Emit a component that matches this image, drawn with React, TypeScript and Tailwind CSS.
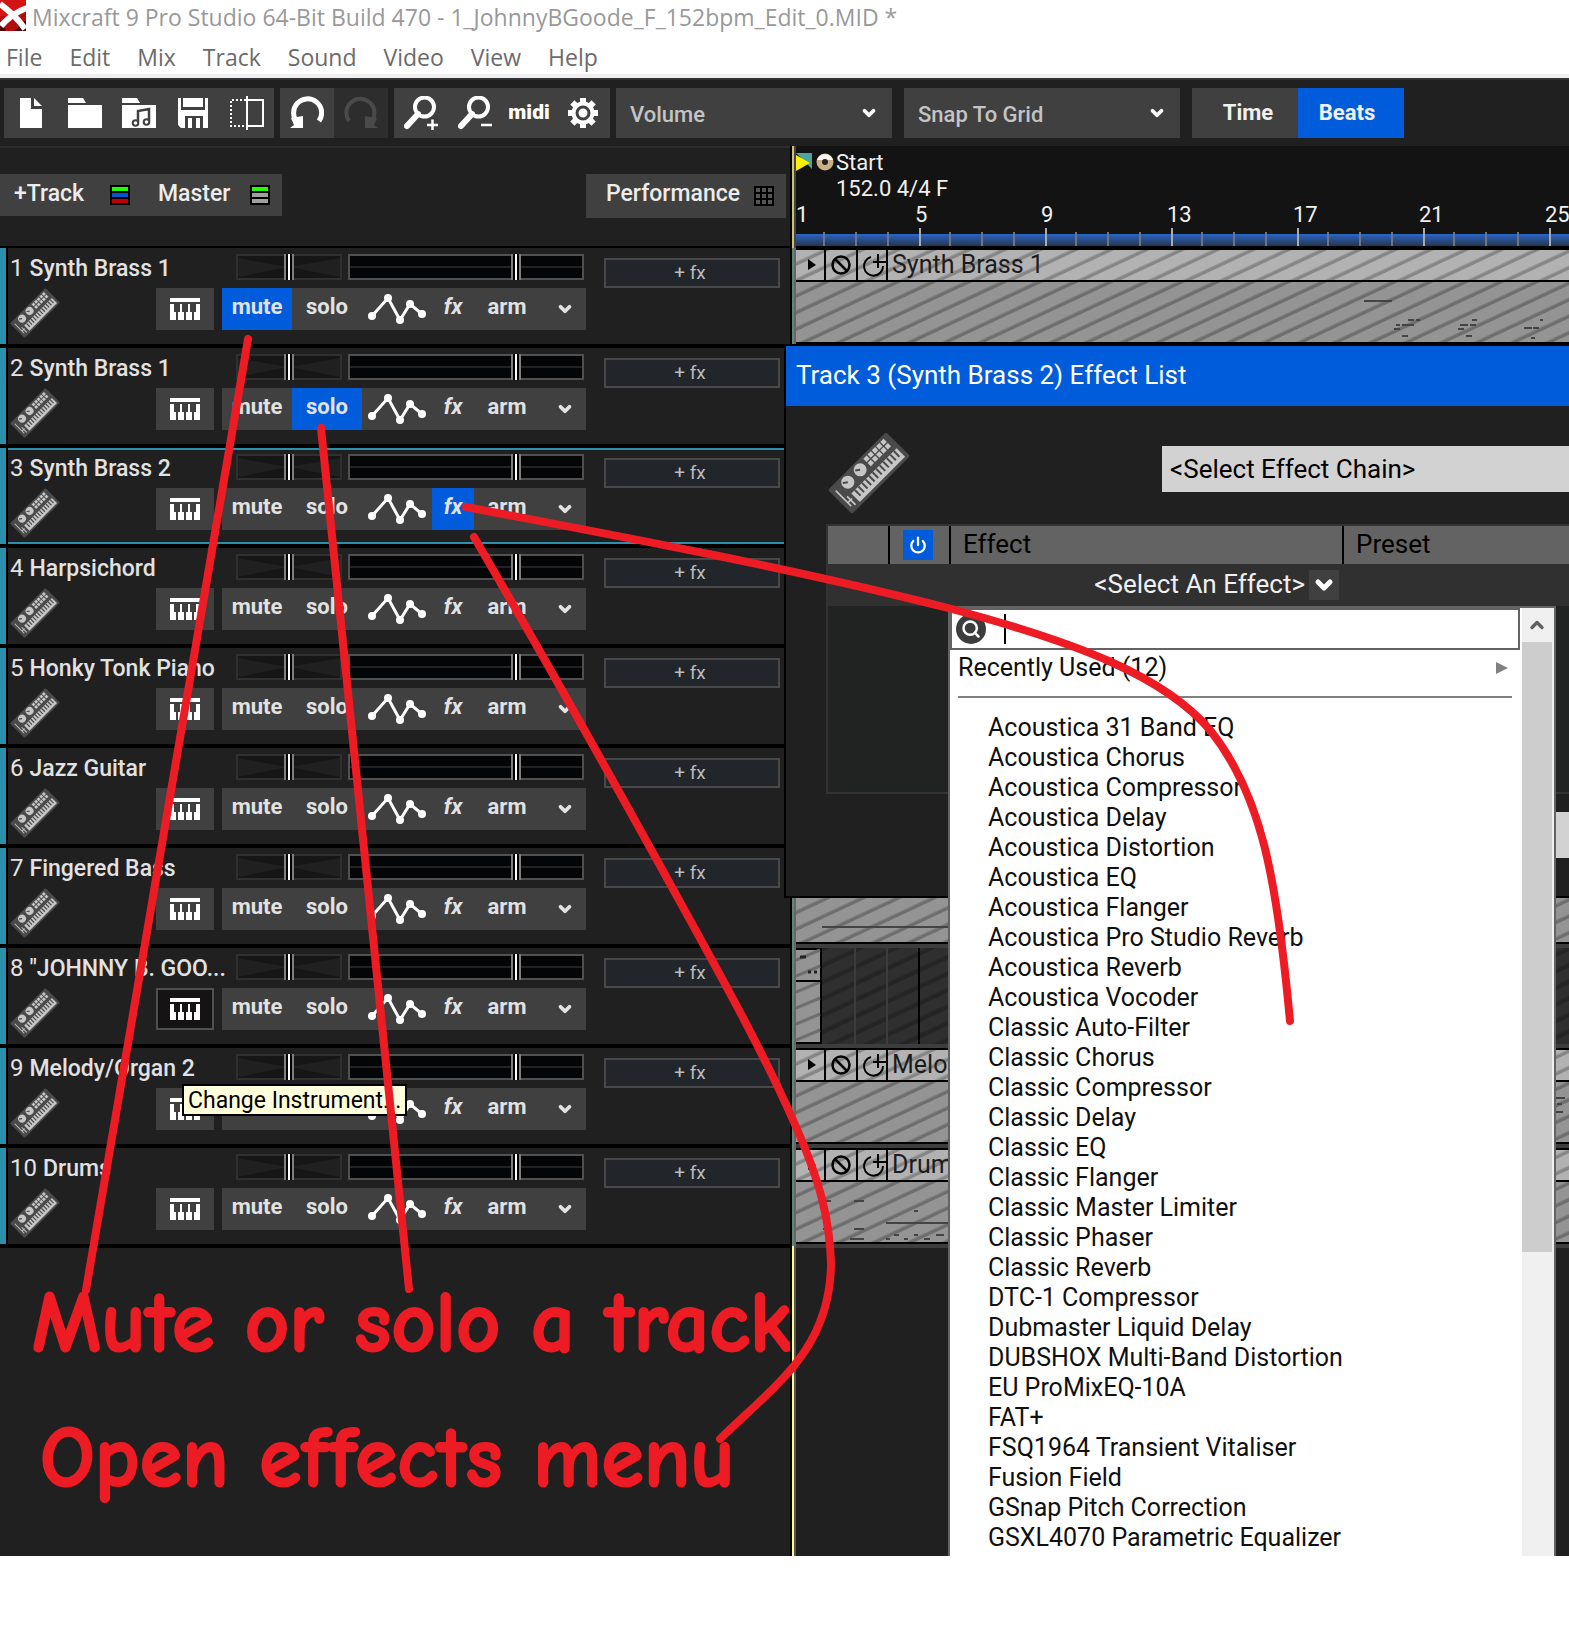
import type { ReactNode } from "react";
import { ChevronDown, ChevronUp, Power, Search } from "lucide-react";

type Track = {
  id: number;
  name: string;
  active?: "mute" | "solo" | "fx";
  selected?: boolean;
  keysPressed?: boolean;
  tooltip?: string;
};

const menus = ["File", "Edit", "Mix", "Track", "Sound", "Video", "View", "Help"];

const tracks: Track[] = [
  { id: 1, name: "Synth Brass 1", active: "mute" },
  { id: 2, name: "Synth Brass 1", active: "solo" },
  { id: 3, name: "Synth Brass 2", active: "fx", selected: true },
  { id: 4, name: "Harpsichord" },
  { id: 5, name: "Honky Tonk Piano" },
  { id: 6, name: "Jazz Guitar" },
  { id: 7, name: "Fingered Bass" },
  { id: 8, name: '"JOHNNY B. GOO...', keysPressed: true },
  { id: 9, name: "Melody/Organ 2", tooltip: "Change Instrument..." },
  { id: 10, name: "Drums" },
];

const effects = [
  "Acoustica 31 Band EQ",
  "Acoustica Chorus",
  "Acoustica Compressor",
  "Acoustica Delay",
  "Acoustica Distortion",
  "Acoustica EQ",
  "Acoustica Flanger",
  "Acoustica Pro Studio Reverb",
  "Acoustica Reverb",
  "Acoustica Vocoder",
  "Classic Auto-Filter",
  "Classic Chorus",
  "Classic Compressor",
  "Classic Delay",
  "Classic EQ",
  "Classic Flanger",
  "Classic Master Limiter",
  "Classic Phaser",
  "Classic Reverb",
  "DTC-1 Compressor",
  "Dubmaster Liquid Delay",
  "DUBSHOX Multi-Band Distortion",
  "EU ProMixEQ-10A",
  "FAT+",
  "FSQ1964 Transient Vitaliser",
  "Fusion Field",
  "GSnap Pitch Correction",
  "GSXL4070 Parametric Equalizer",
];

const headerStripes =
  "bg-[repeating-linear-gradient(155deg,#b2b2b2_0px,#b2b2b2_10px,#868686_12px,#868686_14px,#b2b2b2_15px)]";
const bodyStripes =
  "bg-[repeating-linear-gradient(155deg,#949494_0px,#949494_10px,#6e6e6e_12px,#6e6e6e_14px,#949494_15px)]";
const emptyStripes =
  "bg-[repeating-linear-gradient(155deg,#2f2f2f_0px,#2f2f2f_9px,#252525_11px,#252525_14px,#2f2f2f_15px)]";

function KeyboardIcon({ className }: { className: string }) {
  return (
    <svg viewBox="0 0 82 82" className={className} aria-hidden="true">
      <g transform="rotate(-45 41 41)">
        <rect x="0" y="24" width="82" height="34" rx="2" fill="#4a4a4a" />
        <circle cx="19.5" cy="32.5" r="6.5" fill="#c6c6c6" />
        <circle cx="37" cy="32.5" r="6.5" fill="#c6c6c6" />
        <path d="M19.5 32.5l-4-3M37 32.5l-4-3" stroke="#4a4a4a" strokeWidth="2" />
        {[0, 1, 2, 3, 4].map((i) => (
          <g key={i} fill="#c6c6c6">
            <rect x={47 + i * 6} y="27" width="4.6" height="4.6" />
            <rect x={47 + i * 6} y="33" width="4.6" height="4.6" />
          </g>
        ))}
        <rect x="14" y="43" width="64" height="12" fill="#c6c6c6" />
        {[0, 1, 2, 3, 4, 5, 6, 7, 8, 9, 10, 11].map((i) => (
          <rect key={i} x={18 + i * 5} y="43" width="2" height="8" fill="#4a4a4a" />
        ))}
        <path d="M5 30v22M9 42v12M5 47h6" stroke="#c6c6c6" strokeWidth="1.6" />
      </g>
    </svg>
  );
}

function PianoKeysIcon() {
  return (
    <svg width="30" height="22" viewBox="0 0 30 22" fill="#fff" aria-hidden="true">
      <rect width="30" height="4" />
      <path d="M0 6h4v8h2v8H0zM10 6h2v8h2v8H8v-8h2zM18 6h2v8h2v8h-6v-8h2zM26 6h4v16h-6v-8h2z" />
    </svg>
  );
}

function AutomationIcon() {
  return (
    <svg width="70" height="42" viewBox="0 0 70 42" fill="#fff" aria-hidden="true">
      <path d="M10 28L26 10L38 32L48 16L60 26" fill="none" stroke="#fff" strokeWidth="3" />
      <circle cx="10" cy="28" r="4" />
      <circle cx="26" cy="10" r="4" />
      <circle cx="38" cy="32" r="4" />
      <circle cx="48" cy="16" r="4" />
      <circle cx="60" cy="26" r="4" />
    </svg>
  );
}

function ToolIcon({ children }: { children: ReactNode }) {
  return (
    <svg width="34" height="34" viewBox="0 0 34 34" fill="#fff" aria-hidden="true">
      {children}
    </svg>
  );
}

function ToolButton({ label, dim, children }: { label: string; dim?: boolean; children: ReactNode }) {
  return (
    <button
      type="button"
      aria-label={label}
      disabled={dim}
      className={`flex h-[50px] w-[54px] items-center justify-center ${dim ? "bg-[#2d2d2d]" : "bg-[#404040]"}`}
    >
      {children}
    </button>
  );
}

function ToolSelect({ label, value }: { label: string; value: string }) {
  return (
    <div className="relative h-[50px] w-[276px]">
      <select
        aria-label={label}
        defaultValue={value}
        className="h-full w-full appearance-none bg-[#404040] pt-0.5 pl-3.5 text-[22px] font-medium text-[#c4c4c4]"
      >
        <option>{value}</option>
      </select>
      <ChevronDown className="pointer-events-none absolute top-4 right-3.5 size-[18px] text-white" strokeWidth={5} />
    </div>
  );
}

function TitleBar() {
  return (
    <header className="border-b-4 border-[#f0f0f0] bg-white font-['Open_Sans',sans-serif]">
      <div className="flex h-[34px] items-center gap-1.5 text-[23px] leading-[34px] text-[#999]">
        <svg width="26" height="31" viewBox="0 0 26 31" className="self-start" aria-hidden="true">
          <rect width="26" height="31" fill="#b50d0d" />
          <path d="M0 0h26v10L8 16H0z" fill="#d41414" />
          <path d="M14 31L26 20v11zM0 20l6 11H0z" fill="#4a0303" />
          <path d="M0 4c8 6 17 13 25 25M27 8C18 11 8 18 1 26" stroke="#fff" strokeWidth="6" fill="none" />
        </svg>
        <h1 className="whitespace-nowrap">
          Mixcraft 9 Pro Studio 64-Bit Build 470 - 1_JohnnyBGoode_F_152bpm_Edit_0.MID *
        </h1>
      </div>
      <nav className="flex h-10 items-start gap-[27px] pl-1.5 text-[23px] leading-[46px] text-[#6b6b6b]">
        {menus.map((menu) => (
          <button key={menu} type="button">
            {menu}
          </button>
        ))}
      </nav>
    </header>
  );
}

function Toolbar() {
  return (
    <div className="flex h-[68px] items-center border-t-2 border-[#333] bg-[#202020] pl-1">
      <div className="flex">
        <ToolButton label="New">
          <ToolIcon>
            <path d="M6 2h11v11h11v19H6zM20 2l8 8h-8z" />
          </ToolIcon>
        </ToolButton>
        <ToolButton label="Open">
          <ToolIcon>
            <path d="M0 2h15l3 5H0zM0 9h34v23H0z" />
          </ToolIcon>
        </ToolButton>
        <ToolButton label="Open library">
          <ToolIcon>
            <path d="M0 2h15l3 5H0zM0 9h34v23H0z" />
            <path d="M16 26V15l11-2v12" stroke="#404040" strokeWidth="2.5" fill="none" />
            <circle cx="13.500" cy="27" r="2.800" stroke="#404040" strokeWidth="2" />
            <circle cx="24.500" cy="26" r="2.800" stroke="#404040" strokeWidth="2" />
          </ToolIcon>
        </ToolButton>
        <ToolButton label="Save">
          <ToolIcon>
            <path d="M2 2h3v12h24V2h3v30h-5V20H9v12H5l-3-3zM7 2h18v9H7zM21 2h6v9h-6zM12 22h4v10h-4zM20 22h4v10h-4z" />
          </ToolIcon>
        </ToolButton>
        <ToolButton label="Split">
          <ToolIcon>
            <path d="M16 4H1v26h15" fill="none" stroke="#fff" strokeWidth="2" strokeDasharray="2 2" />
            <path d="M17 0v34M17 4h16v26H17" fill="none" stroke="#fff" strokeWidth="2" />
          </ToolIcon>
        </ToolButton>
      </div>
      <div className="ml-1.5 flex">
        <ToolButton label="Undo">
          <ToolIcon>
            <path d="M8 27A14 14 0 1 1 29 25" fill="none" stroke="#fff" strokeWidth="5" />
            <path d="M0 32l4-3-3-7 12-2v12z" />
          </ToolIcon>
        </ToolButton>
        <ToolButton label="Redo" dim>
          <ToolIcon>
            <path d="M26 27A14 14 0 1 0 5 25" fill="none" stroke="#4a4a4a" strokeWidth="4" />
            <path d="M34 32l-4-3 3-7-12-2v12z" fill="#4a4a4a" />
          </ToolIcon>
        </ToolButton>
      </div>
      <div className="ml-1.5 flex">
        <ToolButton label="Zoom in">
          <ToolIcon>
            <circle cx="20.500" cy="11" r="9.500" fill="none" stroke="#fff" strokeWidth="4" />
            <path d="M14 18L3 30" stroke="#fff" strokeWidth="6" strokeLinecap="round" />
            <path d="M23 29h11M28.500 23.500v11" stroke="#fff" strokeWidth="2.500" />
          </ToolIcon>
        </ToolButton>
        <ToolButton label="Zoom out">
          <ToolIcon>
            <circle cx="20.500" cy="11" r="9.500" fill="none" stroke="#fff" strokeWidth="4" />
            <path d="M14 18L3 30" stroke="#fff" strokeWidth="6" strokeLinecap="round" />
            <path d="M23 29h11" stroke="#fff" strokeWidth="2.500" />
          </ToolIcon>
        </ToolButton>
        <button
          type="button"
          className="flex h-[50px] w-[54px] items-center justify-center bg-[#404040] text-[21px] font-black text-white"
        >
          midi
        </button>
        <ToolButton label="Preferences">
          <ToolIcon>
            {[0, 45, 90, 135].map((deg) => (
              <rect key={deg} x="14" y="2" width="6" height="30" transform={`rotate(${deg} 17 17)`} />
            ))}
            <circle cx="17" cy="17" r="11.500" />
            <circle cx="17" cy="17" r="6" stroke="#404040" strokeWidth="3" />
          </ToolIcon>
        </ToolButton>
      </div>
      <div className="ml-1.5 flex gap-3">
        <ToolSelect label="Automation" value="Volume" />
        <ToolSelect label="Snap" value="Snap To Grid" />
        <div className="flex h-[50px] text-[22px] font-bold text-[#f0f0f0]">
          <button type="button" className="w-[106px] bg-[#404040] pb-0.5 pl-1.5">
            Time
          </button>
          <button type="button" className="w-[106px] bg-[#005cdb] pr-2 pb-0.5">
            Beats
          </button>
        </div>
      </div>
    </div>
  );
}

function ListIcon({ bars }: { bars: string[] }) {
  return (
    <svg width="20" height="20" viewBox="0 0 20 20" aria-hidden="true">
      <rect width="20" height="20" fill="#000" />
      {bars.map((fill, i) => (
        <rect key={i} x="2" y={2 + i * 6} width="16" height="4" fill={fill} />
      ))}
    </svg>
  );
}

function TrackHeaderBar() {
  return (
    <div className="flex h-[102px] items-start justify-between border-t-2 border-b-2 border-t-[#2d2d2d] border-b-black pt-[26px] pr-1 text-[23px] font-medium text-[#ececec]">
      <div className="flex h-[42px] bg-[#404040]">
        <button type="button" className="flex w-[144px] items-center justify-between px-3.5">
          <span className="pb-0.5">+Track</span>
          <ListIcon bars={["#1eff00", "#0055d4", "#c00000"]} />
        </button>
        <button type="button" className="flex w-[138px] items-center justify-between pr-3 pl-3.5">
          <span className="pb-0.5">Master</span>
          <ListIcon bars={["#1eff00", "#a0a0a0", "#a0a0a0"]} />
        </button>
      </div>
      <button type="button" className="flex h-[44px] w-[200px] items-center justify-between bg-[#404040] pr-3 pl-5">
        <span className="pb-1">Performance</span>
        <svg width="20" height="20" viewBox="0 0 20 20" aria-hidden="true">
          <rect width="20" height="20" fill="#000" />
          {[0, 1, 2, 3, 4, 5, 6, 7, 8].map((i) => (
            <rect key={i} x={2 + (i % 3) * 6} y={2 + Math.floor(i / 3) * 6} width="4" height="4" fill="#555" />
          ))}
        </svg>
      </button>
    </div>
  );
}

const sliderClass =
  "h-[26px] w-full appearance-none bg-transparent [grid-area:1/1] [&::-webkit-slider-thumb]:h-[26px] [&::-webkit-slider-thumb]:w-[10px] [&::-webkit-slider-thumb]:appearance-none [&::-webkit-slider-thumb]:bg-[linear-gradient(90deg,#808080_2px,#000_2px,#000_4px,#fff_4px,#fff_6px,#000_6px,#000_8px,#808080_8px)]";

function PanSlider({ label }: { label: string }) {
  return (
    <div className="grid w-[106px]">
      <svg className="h-[26px] w-full [grid-area:1/1]" viewBox="0 0 106 26" aria-hidden="true">
        <rect x="1" y="1" width="104" height="24" fill="#161616" stroke="#303030" strokeWidth="2" />
        <path d="M2 4L52 13L2 23zM104 4L54 13L104 23z" fill="#202020" />
      </svg>
      <input type="range" aria-label={label} defaultValue={50} className={sliderClass} />
    </div>
  );
}

function VolumeSlider({ label }: { label: string }) {
  return (
    <div className="grid w-[236px]">
      <div className="h-[26px] border-2 border-[#505050] bg-[linear-gradient(#040506_10px,#222_10px,#222_12px,#040506_12px)] [grid-area:1/1]" />
      <input type="range" aria-label={label} defaultValue={72} className={sliderClass} />
    </div>
  );
}

function TrackRow({ track }: { track: Track }) {
  const on = "bg-[#005cdb]";
  // the tooltip lies over these two captions
  const caption = track.tooltip ? "invisible" : "";
  return (
    <section className="relative flex h-[100px] border-b-4 border-black bg-[#202020]">
      <div className="w-2 shrink-0 border-r-2 border-black bg-[#2d8fae]" />
      <div className={`flex min-w-0 flex-1 ${track.selected ? "border-y-2 border-[#2d8fae]" : "border-y-2 border-[#202020]"}`}>
        <div className="w-[578px] shrink-0">
          <div className="flex h-[38px] items-start gap-1.5 pt-1">
            <h2 className="flex w-[222px] items-baseline gap-1.5 pl-0.5 leading-[28px] whitespace-nowrap text-[#e2e2e2]">
              <span className="text-[24px]">{track.id}</span>
              <span className="text-[23px] font-medium">{track.name}</span>
            </h2>
            <PanSlider label={`Pan ${track.id}`} />
            <VolumeSlider label={`Volume ${track.id}`} />
          </div>
          <div className="flex h-[42px] text-[22px] font-bold text-[#e2e2e2]">
            <KeyboardIcon className="ml-0.5 size-[50px] shrink-0" />
            <button
              type="button"
              aria-label="Instrument"
              className={`mr-2 ml-24 flex w-[58px] items-center justify-center ${
                track.keysPressed ? "border-2 border-[#505050] bg-[#161315]" : "bg-[#404040]"
              }`}
            >
              <PianoKeysIcon />
            </button>
            <div className="flex bg-[#404040]">
              <button type="button" className={`w-[70px] pb-1.5 ${caption} ${track.active === "mute" ? on : ""}`}>
                mute
              </button>
              <button type="button" className={`w-[70px] pb-1.5 ${caption} ${track.active === "solo" ? on : ""}`}>
                solo
              </button>
              <button type="button" aria-label="Automation">
                <AutomationIcon />
              </button>
              <button type="button" className={`w-[42px] pb-1.5 italic ${track.active === "fx" ? on : ""}`}>
                fx
              </button>
              <button type="button" className="w-[66px] pb-1.5">
                arm
              </button>
              <button type="button" aria-label="More" className="flex w-[46px] items-center justify-center pl-1">
                <ChevronDown className="size-[18px]" strokeWidth={5} />
              </button>
            </div>
          </div>
        </div>
        <div className="pt-2 pl-[18px]">
          <button
            type="button"
            className="h-[30px] w-[176px] border-2 border-[#484848] bg-[#22262a] pr-1 text-[19px] leading-[26px] text-[#bcbcbc]"
          >
            + fx
          </button>
        </div>
      </div>
      {track.tooltip && (
        <div
          role="tooltip"
          className="absolute top-9 left-[182px] border-2 border-black bg-[#ffffdc] px-1 pt-0.5 text-[23px] leading-[26px] whitespace-nowrap text-black"
        >
          {track.tooltip}
        </div>
      )}
    </section>
  );
}

function TimelineRuler() {
  return (
    <div className="h-[102px] border-b-2 border-black bg-[#131313] text-[22px] text-[#f0f0f0]">
      <div className="flex h-[52px] items-start pt-1">
        <svg width="40" height="24" viewBox="0 0 40 24" aria-hidden="true">
          <path d="M0 3h16v16z" fill="#4aa59c" />
          <path d="M0 5l14 8L0 21z" fill="#ffee00" />
          <circle cx="29" cy="12" r="8.500" fill="#c9b183" />
          <path d="M21 10a8.500 8.500 0 0 1 16 0z" fill="#f5f5f5" />
          <circle cx="29" cy="12" r="3" fill="#222" />
        </svg>
        <p className="leading-[26px]">
          Start
          <br />
          152.0 4/4 F
        </p>
      </div>
      <div className="flex h-[30px] overflow-hidden leading-[30px]">
        <span className="w-[119px] shrink-0 pt-0.5">1</span>
        {[5, 9, 13, 17, 21, 25].map((bar) => (
          <span key={bar} className="w-[126px] shrink-0 pt-0.5">
            {bar}
          </span>
        ))}
      </div>
      <svg className="h-[18px] w-full" aria-hidden="true">
        <defs>
          <linearGradient id="ruler" x1="0" y1="0" x2="0" y2="1">
            <stop offset="0" stopColor="#2a66c8" />
            <stop offset="1" stopColor="#26354a" />
          </linearGradient>
          <pattern id="ticks" width="126" height="18" x="-3" y="0" patternUnits="userSpaceOnUse">
            <path d="M1 0v18" stroke="#aaa" strokeWidth="2" />
            <path d="M31 4v14M63 4v14M95 4v14" stroke="#6f7580" strokeWidth="2" />
          </pattern>
        </defs>
        <rect y="6" width="100%" height="12" fill="url(#ruler)" />
        <rect width="100%" height="18" fill="url(#ticks)" />
      </svg>
    </div>
  );
}

function ClipLane({ name, notes, narrow }: { name?: string; notes?: string; narrow?: boolean }) {
  return (
    <div className="h-[100px] border-b-4 border-[#3d3d3d]">
      <div className="h-24 border-y-2 border-black">
        <div className={`flex h-8 border-b-2 border-black text-[25px] leading-[30px] text-[#1c1c1c] ${headerStripes}`}>
          <svg width="92" height="30" viewBox="0 0 92 30" className="shrink-0" fill="none" stroke="#000" aria-hidden="true">
            <path d="M29 0v30M61 0v30M91 0v30" strokeWidth="2" />
            <path d="M12 9l8 6l-8 5z" fill="#000" stroke="none" />
            <circle cx="45" cy="15" r="8.500" strokeWidth="2.500" />
            <path d="M39 9l12 12" strokeWidth="2.500" />
            <path d="M75 7a9.500 9.500 0 1 0 12 9M82 4v14M77 12h13" strokeWidth="2" />
          </svg>
          <span className={`overflow-hidden pl-1 whitespace-nowrap ${narrow ? "w-[60px]" : ""}`}>{name}</span>
        </div>
        <div className={`h-[60px] ${bodyStripes}`}>
          {notes && (
            <svg width="773" height="60" viewBox="0 0 773 60" fill="none" stroke="#444" strokeWidth="2" aria-hidden="true">
              <path d={notes} />
            </svg>
          )}
        </div>
      </div>
    </div>
  );
}

function Timeline() {
  return (
    <div className="min-w-0 flex-1 overflow-hidden">
      <TimelineRuler />
      <ClipLane
        name="Synth Brass 1"
        notes="M568 19h28M612 38h6M620 38h4M600 43h4M606 43h12M598 47h6M606 54h6M676 38h5M664 43h8M674 43h6M662 47h6M670 54h6M744 38h3M728 46h8M737 46h6M735 56h4"
      />
      <ClipLane />
      <ClipLane />
      <ClipLane />
      <ClipLane />
      <ClipLane />
      <ClipLane notes="M26 45h640" />
      <div className={`h-[100px] border-b-4 border-[#3d3d3d] ${emptyStripes}`}>
        <svg width="130" height="96" viewBox="0 0 130 96" fill="none" aria-hidden="true">
          <path d="M59 0v96M91 0v96" stroke="#3c3c3c" strokeWidth="2" />
          <path d="M123 0v96" stroke="#000" strokeWidth="2" />
          <rect x="-4" y="1" width="29" height="94" fill="#949494" stroke="#000" strokeWidth="2" />
          <path d="M0 12l24-10M0 28l24-10M0 44l24-10M0 60l24-10M0 76l24-10M0 92l24-10" stroke="#6e6e6e" strokeWidth="3" />
          <path d="M0 33h25" stroke="#000" strokeWidth="2" />
          <path d="M4 9h6M12 24h3M18 24h3" stroke="#222" strokeWidth="3" />
        </svg>
      </div>
      <ClipLane narrow name="Melody" notes="M757 16h12M761 22h5M759 30h8" />
      <ClipLane
        narrow
        name="Drums"
        notes="M27 19h8M58 19h10M118 29h4M90 41h70M27 47h8M58 47h10M54 57h14M90 57h4M98 53h5M108 57h4M118 53h4M128 57h6M140 53h8"
      />
    </div>
  );
}

function EffectMenu() {
  return (
    <div className="absolute top-[260px] left-[162px] flex w-[608px] border-2 border-[#636363] bg-white text-[25px] text-[#101010]">
      <div className="w-[570px]">
        <label className="flex h-[42px] items-center border-2 border-[#636363] pl-1">
          <span className="flex size-[30px] items-center justify-center rounded-full bg-[#3c3c3c]">
            <Search className="size-5 text-white" strokeWidth={3} />
          </span>
          <input
            type="text"
            aria-label="Search effects"
            className="ml-[18px] h-[30px] min-w-0 flex-1 border-l-2 border-black pl-1 outline-none"
          />
        </label>
        <button type="button" className="flex h-[34px] w-full items-center justify-between pt-0.5 pr-3 pl-2">
          <span>Recently Used (12)</span>
          <svg width="12" height="12" viewBox="0 0 12 12" aria-hidden="true">
            <path d="M0 0l12 6l-12 6z" fill="#808080" />
          </svg>
        </button>
        <div className="mx-2 mt-3 mb-[15px] h-0.5 bg-[#808080]" />
        <ul className="pb-2">
          {effects.map((effect) => (
            <li key={effect} className="pl-[38px] leading-[30px] whitespace-nowrap">
              {effect}
            </li>
          ))}
        </ul>
      </div>
      <div className="ml-0.5 w-8 bg-[#f0f0f0] pr-0.5">
        <button type="button" aria-label="Scroll up" className="flex h-[34px] w-full items-center justify-center">
          <ChevronUp className="size-5 text-[#606060]" strokeWidth={4} />
        </button>
        <div className="h-[610px] bg-[#cdcdcd]" />
      </div>
    </div>
  );
}

function EffectDialog() {
  return (
    <div
      role="dialog"
      aria-label="Effect list"
      className="absolute top-[198px] right-0 left-[784px] h-[554px] border-y-2 border-l-2 border-black bg-[#202020] text-[26px] text-[#f0f0f0]"
    >
      <h2 className="h-[60px] bg-[#005cdb] pl-2.5 leading-[58px] text-white">Track 3 (Synth Brass 2) Effect List</h2>
      <div className="flex h-[118px] items-start justify-between pt-[26px]">
        <KeyboardIcon className="ml-[42px] size-[82px] shrink-0" />
        <select
          aria-label="Effect chain"
          defaultValue="<Select Effect Chain>"
          className="mt-3.5 ml-[252px] h-[46px] min-w-0 flex-1 appearance-none bg-[#d2d2d2] pl-2 text-black"
        >
          <option>{"<Select Effect Chain>"}</option>
        </select>
      </div>
      <div className="ml-10 h-[270px] border-y-2 border-l-2 border-[#333] bg-[#212323]">
        <table className="w-full table-fixed border-collapse">
          <thead>
            <tr className="h-[38px] bg-[#636363] text-left text-black">
              <th scope="col" aria-label="Number" className="w-[61px] p-0" />
              <th scope="col" className="w-[61px] border-l-2 border-black p-0 pr-1">
                <button type="button" aria-label="Power" className="mx-auto flex size-[30px] items-center justify-center bg-[#005cdb]">
                  <Power className="size-[18px] text-white" strokeWidth={3} />
                </button>
              </th>
              <th scope="col" className="w-[393px] border-l-2 border-black p-0 pb-0.5 pl-3 leading-[34px] font-normal">
                Effect
              </th>
              <th scope="col" className="border-l-2 border-black p-0 pb-0.5 pl-3 leading-[34px] font-normal">
                Preset
              </th>
            </tr>
          </thead>
          <tbody>
            <tr className="h-[42px] bg-[#303030]">
              <td colSpan={3} className="p-0">
                <button type="button" aria-haspopup="listbox" className="ml-auto flex items-center gap-1 pr-1 leading-[36px]">
                  <span className="pb-0.5">{"<Select An Effect>"}</span>
                  <span className="flex size-[30px] items-center justify-center bg-[#404040]">
                    <ChevronDown className="size-6 text-white" strokeWidth={5} />
                  </span>
                </button>
              </td>
              <td className="p-0" />
            </tr>
          </tbody>
        </table>
      </div>
      <div className="flex justify-end pt-[18px]">
        <button type="button" aria-label="Close" className="h-[46px] w-[120px] bg-[#d2d2d2]" />
      </div>
      <EffectMenu />
    </div>
  );
}

function Annotations() {
  return (
    <svg
      width="1400"
      height="1556"
      viewBox="0 0 1400 1556"
      className="pointer-events-none absolute top-0 left-0"
      fill="none"
      stroke="#ed1c24"
      strokeWidth="8"
      strokeLinecap="round"
      strokeLinejoin="round"
      aria-hidden="true"
    >
      <path d="M248 339L86 1290" />
      <path d="M321 428L409 1289" />
      <path d="M474 537C540 650 610 775 668 880S762 1050 793 1120C820 1180 830 1220 831 1264C830 1350 775 1385 720 1439" />
      <path d="M466 507C630 538 800 570 948 608C1080 643 1165 677 1210 730C1262 795 1277 880 1290 1021" />
    </svg>
  );
}

export default function App() {
  return (
    <div className="relative min-h-screen overflow-hidden bg-white font-['Roboto',sans-serif]">
      <TitleBar />
      <Toolbar />
      <main className="relative flex overflow-hidden bg-[#202020]">
        <div className="w-[790px] shrink-0">
          <TrackHeaderBar />
          {tracks.map((track) => (
            <TrackRow key={track.id} track={track} />
          ))}
          <div className="pt-2 pb-[30px] pl-8 font-['Comic_Sans_MS','Comic_Neue',Lato,sans-serif] text-[86px] leading-[135px] font-bold whitespace-nowrap text-[#ed1c24] [-webkit-text-stroke:2px_#ed1c24] [font-variant-ligatures:none]">
            <p>Mute or solo a track</p>
            <p className="pl-2">Open effects menu</p>
          </div>
        </div>
        <div className="flex w-1.5 shrink-0 flex-col border-l-2 border-black">
          <div className="h-[102px] border-r-2 border-[#444] bg-[#c9c07a]" />
          <div className="h-[998px] border-r-2 border-[#666] bg-[#5f8577]" />
          <div className="flex-1 border-r-2 border-[#555] bg-[#fff59a]" />
        </div>
        <Timeline />
        <EffectDialog />
      </main>
      <Annotations />
    </div>
  );
}
